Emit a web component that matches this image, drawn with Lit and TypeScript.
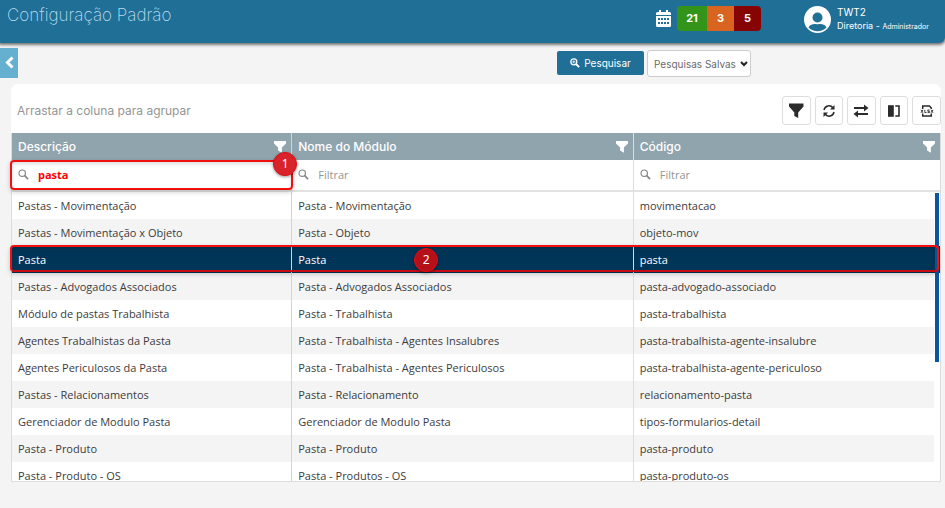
import { LitElement, html, css, svg } from "lit";
import { customElement } from "lit/decorators.js";
import { classMap } from "lit/directives/class-map.js";

const funnel = svg`<path d="M0 0H12V2.600L7.900 6.600V11.800L4.100 9.600V6.600L0 2.600Z"/>`;

const lens = html`<svg class="lens" viewBox="0 0 12 12" aria-hidden="true">
  <circle cx="4.600" cy="4.600" r="3.500" fill="none" stroke="currentColor" stroke-width="1.300"></circle>
  <path d="M7 7L11 11" fill="none" stroke="currentColor" stroke-width="1.800"></path>
</svg>`;

const lensPlus = html`<svg class="lens" viewBox="0 0 12 12" aria-hidden="true">
  <circle cx="4.600" cy="4.600" r="3.600" fill="none" stroke="currentColor" stroke-width="1.500"></circle>
  <path d="M4.600 2.800V6.400M2.800 4.600H6.400" fill="none" stroke="currentColor" stroke-width="1"></path>
  <path d="M7.200 7.200L11 11" fill="none" stroke="currentColor" stroke-width="2.200"></path>
</svg>`;

const tools = [
  {
    label: "Filtros",
    icon: svg`<path d="M2 1.500H16.500V4.500L11.200 10.500V16L7.300 14V10.500L2 4.500Z" fill="currentColor" stroke="none"/>`,
  },
  {
    label: "Atualizar",
    icon: svg`<path d="M4 8A5 5 0 0 1 13 6M14 10A5 5 0 0 1 5 12" stroke-width="1.500"/><path d="M14.500 3V7.500H10ZM3.500 15V10.500H8Z" fill="currentColor" stroke="none"/>`,
  },
  {
    label: "Alternar",
    icon: svg`<path d="M2 6H13M5 12H16"/><path d="M12 2.500L16.500 6L12 9.500ZM6 8.500L1.500 12L6 15.500Z" fill="currentColor" stroke="none"/>`,
  },
  {
    label: "Colunas",
    icon: svg`<path d="M3 3.200H8.800V14.800H3Z" fill="currentColor" stroke="none"/><path d="M10.300 4H14V14H10.300" stroke-width="1.600"/>`,
  },
  {
    label: "Exportar XLSX",
    icon: svg`<path d="M4.700 7V4H11.500L13.300 6V7M4.700 11.500V14H13.300V11.500" stroke-width="1.500"/><path d="M3 7.800L5 10.800M5 7.800L3 10.800M6.800 7.800V10.500H8.500M11.500 8H9.800V9.300H11.500V10.600H9.600M13 7.800L15 10.800M15 7.800L13 10.800" stroke-width="0.900"/>`,
  },
];

const columns = ["Descrição", "Nome do Módulo", "Código"];

const rows = [
  ["Pastas - Movimentação", "Pasta - Movimentação", "movimentacao"],
  ["Pastas - Movimentação x Objeto", "Pasta - Objeto", "objeto-mov"],
  ["Pasta", "Pasta", "pasta"],
  ["Pastas - Advogados Associados", "Pasta - Advogados Associados", "pasta-advogado-associado"],
  ["Módulo de pastas Trabalhista", "Pasta - Trabalhista", "pasta-trabalhista"],
  ["Agentes Trabalhistas da Pasta", "Pasta - Trabalhista - Agentes Insalubres", "pasta-trabalhista-agente-insalubre"],
  ["Agentes Periculosos da Pasta", "Pasta - Trabalhista - Agentes Periculosos", "pasta-trabalhista-agente-periculoso"],
  ["Pastas - Relacionamentos", "Pasta - Relacionamento", "relacionamento-pasta"],
  ["Gerenciador de Modulo Pasta", "Gerenciador de Modulo Pasta", "tipos-formularios-detail"],
  ["Pasta - Produto", "Pasta - Produto", "pasta-produto"],
  ["Pasta - Produto - OS", "Pasta - Produtos - OS", "pasta-produto-os"],
];

const selected = 2;

@customElement("app-header")
export class AppHeader extends LitElement {
  static styles = css`
    :host {
      display: flex;
      align-items: flex-start;
      justify-content: space-between;
      height: 43px;
      box-sizing: border-box;
      padding: 0 16px 0 7px;
      background: #206f97;
      color: #fff;
      border-bottom-right-radius: 6px;
      box-shadow: 0 1px 3px 1px #777;
      font-family: Inter, sans-serif;
    }
    .title {
      margin: 0;
      font-size: 17px;
      line-height: 30px;
      font-weight: 200;
      color: #b9dcec;
    }
    .right {
      display: flex;
      align-items: flex-start;
      padding-top: 6px;
    }
    .calendar {
      width: 15px;
      height: 17px;
      margin: 4px 6px 0 0;
      fill: #fff;
    }
    .counts {
      display: flex;
      border-radius: 4px;
      overflow: hidden;
      font-size: 11px;
      font-weight: 700;
      line-height: 25px;
      text-align: center;
    }
    .count { width: 27px; }
    .open { width: 30px; background: #34941a; }
    .warn { background: #d8641f; }
    .late { background: #870404; }
    .avatar {
      width: 27px;
      height: 27px;
      margin: 0 6px 0 43px;
    }
    .user {
      width: 92px;
      font-size: 10px;
      line-height: 14px;
      margin-top: -1px;
      white-space: nowrap;
    }
    .role { font-size: 9px; }
    .profile { font-size: 7px; }
  `;

  render() {
    return html`
      <h1 class="title">Configuração Padrão</h1>
      <div class="right">
        <svg class="calendar" viewBox="0 0 15 17" aria-hidden="true">
          <path d="M3 0H5V2H10V0H12V2H13.500Q15 2 15 3.500V5H0V3.500Q0 2 1.500 2H3Z"/>
          <path fill-rule="evenodd" d="M0 6H15V15.500Q15 17 13.500 17H1.500Q0 17 0 15.500ZM2 8V10H4V8ZM5 8V10H7V8ZM8 8V10H10V8ZM11 8V10H13V8ZM2 12V14H4V12ZM5 12V14H7V12ZM8 12V14H10V12ZM11 12V14H13V12Z"/>
        </svg>
        <div class="counts">
          <span class="count open">21</span>
          <span class="count warn">3</span>
          <span class="count late">5</span>
        </div>
        <svg class="avatar" viewBox="0 0 27 27" aria-hidden="true">
          <circle cx="13.500" cy="13.500" r="13.500" fill="#fff"/>
          <path d="M4.500 21.500C6 18.500 9 17.800 13.500 17.800S21 18.500 22.500 21.500C17.500 26.500 9.500 26.500 4.500 21.500Z" fill="#206f97"/>
          <circle cx="13.500" cy="12" r="6.300" fill="#fff"/>
          <circle cx="13.500" cy="11.500" r="5" fill="#206f97"/>
        </svg>
        <div class="user">
          <div>TWT2</div>
          <div class="role">Diretoria - <span class="profile">Administrador</span></div>
        </div>
      </div>
    `;
  }
}

@customElement("module-grid")
export class ModuleGrid extends LitElement {
  static styles = css`
    :host {
      display: flex;
      flex-direction: column;
      min-height: 0;
      background: #fff;
      border-radius: 7px 7px 0 0;
      font-family: Inter, sans-serif;
    }
    .bar {
      display: flex;
      align-items: center;
      justify-content: space-between;
      padding: 12px 0 8px 6px;
    }
    .hint { font-size: 12px; color: #959595; }
    .tools {
      display: grid;
      grid-template-columns: repeat(5, 1fr);
      gap: 4px;
      width: 159px;
    }
    .tool {
      height: 29px;
      padding: 0;
      display: grid;
      place-items: center;
      background: #fff;
      border: 1px solid #ddd;
      border-radius: 3px;
      color: #2b2b2b;
    }
    .tool svg {
      width: 18px;
      height: 18px;
      fill: none;
      stroke: currentColor;
      stroke-width: 1.8;
    }
    .frame {
      position: relative;
      flex: 1;
      min-height: 0;
      overflow-x: visible;
      overflow-y: clip;
      border: 1px solid #ddd;
      border-top: 0;
    }
    table {
      width: 100%;
      table-layout: fixed;
      border-collapse: separate;
      border-spacing: 0;
      font-family: "Open Sans", sans-serif;
      font-size: 11px;
      color: #3c3c3c;
    }
    .c0 { width: 30.2%; }
    .c1 { width: 36.8%; }
    th, td {
      position: relative;
      box-sizing: border-box;
      padding: 0 5px 0 6px;
      text-align: left;
      white-space: nowrap;
      border-right: 1px solid #ddd;
    }
    th:first-child, td:first-child { border-right-color: #d4d4d4; }
    th:last-child, td:last-child { border-right: 0; }
    .head {
      height: 27px;
      background: #90a4ae;
      color: #fff;
      font-family: Inter, sans-serif;
      font-size: 12px;
      font-weight: 500;
    }
    .label {
      display: flex;
      align-items: center;
      justify-content: space-between;
    }
    .funnel {
      padding: 0;
      border: 0;
      background: none;
      display: flex;
    }
    .funnel svg { width: 12px; height: 12px; fill: #fff; }
    .filter {
      height: 32px;
      padding-bottom: 2px;
      border-bottom: 2px solid #e2e2e2;
      font-weight: 400;
    }
    .search {
      display: flex;
      align-items: center;
      gap: 9px;
    }
    .lens { width: 11px; height: 11px; color: #858585; flex: none; }
    .search input {
      flex: 1;
      min-width: 0;
      padding: 0;
      border: 0;
      outline: 0;
      background: none;
      font: inherit;
      color: #f00;
      font-weight: 700;
    }
    .search input::placeholder { color: #959595; font-weight: 400; }
    td { height: 27px; }
    .odd td { background: #f4f4f4; }
    .odd td:last-child { background: linear-gradient(to left, #fff 6px, #f4f4f4 6px); }
    .selected td { background: #013557; color: #fff; }
    .thumb {
      position: absolute;
      top: 60px;
      right: 1px;
      width: 4px;
      height: 169px;
      background: #0b55a0;
    }
    .mark {
      position: absolute;
      z-index: 1;
      pointer-events: none;
      border: 2px solid #f01010;
      border-radius: 4px;
      box-shadow: 0 2px 5px #0003, inset 0 2px 4px #0002;
    }
    .mark-filter { inset: 0 -2px 0 -2px; }
    .mark-row { inset: 112px 1px auto -2px; height: 23px; border-bottom-color: #c80a14; }
    .badge {
      position: absolute;
      z-index: 2;
      width: 24px;
      box-sizing: border-box;
      border: 1px solid #e00d14;
      border-radius: 50%;
      background: #d8232a;
      color: #fff;
      font: 12px/22px "Noto Sans", sans-serif;
      text-align: center;
      box-shadow: 0 1px 3px #0006;
    }
    .badge-filter { top: -8px; right: -6px; }
    .badge-row { top: 2px; left: 122px; background: #b50f18; }
  `;

  render() {
    return html`
      <div class="bar">
        <span class="hint">Arrastar a coluna para agrupar</span>
        <div class="tools">
          ${tools.map(
            (t) => html`<button class="tool" aria-label=${t.label}>
              <svg viewBox="0 0 18 18" aria-hidden="true">${t.icon}</svg>
            </button>`
          )}
        </div>
      </div>
      <div class="frame">
        <table>
          <thead>
            <tr>
              ${columns.map(
                (c, i) => html`<th class="head c${i}" scope="col">
                  <div class="label">
                    ${c}
                    <button class="funnel" aria-label="Filtrar ${c}">
                      <svg viewBox="0 0 12 12" aria-hidden="true">${funnel}</svg>
                    </button>
                  </div>
                </th>`
              )}
            </tr>
            <tr>
              ${columns.map(
                (c, i) => html`<th class="filter">
                  <label class="search">
                    ${lens}
                    <input type="text" aria-label=${c} placeholder="Filtrar" .value=${i === 0 ? "pasta" : ""} />
                  </label>
                  ${i === 0
                    ? html`<span class="mark mark-filter"></span><span class="badge badge-filter">1</span>`
                    : ""}
                </th>`
              )}
            </tr>
          </thead>
          <tbody>
            ${rows.map(
              (r, n) => html`<tr class=${classMap({ odd: n % 2 === 1, selected: n === selected })}>
                ${r.map(
                  (cell, i) => html`<td>
                    ${cell}${n === selected && i === 1 ? html`<span class="badge badge-row">2</span>` : ""}
                  </td>`
                )}
              </tr>`
            )}
          </tbody>
        </table>
        <div class="thumb"></div>
        <div class="mark mark-row"></div>
      </div>
    `;
  }
}

@customElement("app-root")
export class AppRoot extends LitElement {
  static styles = css`
    :host {
      display: flex;
      flex-direction: column;
      height: 100vh;
      background: #f4f4f4;
      font-family: Inter, sans-serif;
    }
    .actions {
      display: flex;
      align-items: flex-start;
      padding-top: 5px;
      height: 36px;
    }
    .back {
      width: 18px;
      height: 30px;
      padding: 0;
      border: 0;
      background: #65b0d0;
      display: grid;
      place-items: center;
    }
    .back svg { width: 10px; height: 14px; fill: none; stroke: #fff; stroke-width: 3; }
    .query {
      display: flex;
      gap: 3px;
      margin: 2px 194px 0 auto;
    }
    .go {
      display: flex;
      align-items: center;
      justify-content: center;
      gap: 4px;
      width: 87px;
      height: 24px;
      margin-top: 1px;
      padding: 0;
      border: 0;
      border-radius: 2px;
      background: #206f97;
      color: #fff;
      font: 10px Inter, sans-serif;
    }
    .lens { width: 10px; height: 10px; }
    .picker {
      display: grid;
      align-items: center;
    }
    .picker > * { grid-area: 1 / 1; }
    .saved {
      appearance: none;
      width: 104px;
      height: 27px;
      padding: 0 14px 0 6px;
      border: 1px solid #ccc;
      border-radius: 3px;
      background: #fff;
      color: #6b6b6b;
      font: 10px Inter, sans-serif;
    }
    .arrow {
      justify-self: end;
      width: 8px;
      height: 6px;
      margin-right: 3px;
      fill: none;
      stroke: #222;
      stroke-width: 2;
      pointer-events: none;
    }
    .grid {
      flex: 1;
      margin: 0 4px 26px 11px;
    }
  `;

  render() {
    return html`
      <app-header></app-header>
      <div class="actions">
        <button class="back" aria-label="Voltar">
          <svg viewBox="0 0 10 14" aria-hidden="true"><path d="M8.500 1.500L3.500 6.500L8.500 11.500"/></svg>
        </button>
        <div class="query">
          <button class="go">${lensPlus}Pesquisar</button>
          <div class="picker">
            <select class="saved" aria-label="Pesquisas Salvas">
              <option>Pesquisas Salvas</option>
            </select>
            <svg class="arrow" viewBox="0 0 8 6" aria-hidden="true"><path d="M1 1L4 4L7 1"/></svg>
          </div>
        </div>
      </div>
      <module-grid class="grid"></module-grid>
    `;
  }
}
